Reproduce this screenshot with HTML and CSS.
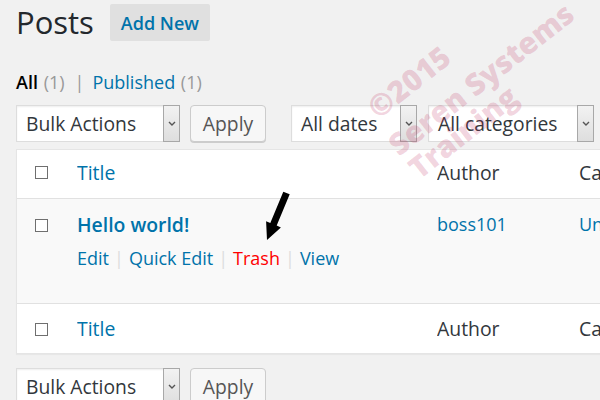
FILE: index.html
```html
<!DOCTYPE html>
<html>
<head>
<meta charset="utf-8">
<link rel="stylesheet" href="styles.css">
</head>
<body>
<div class="page">
  <div class="head">
    <h1 class="title">Posts</h1>
    <a class="add-new">Add New</a>
  </div>
  <div class="views">
    <span class="current">All</span> <span class="count">(1)</span><span class="vsep">|</span><a class="link">Published</a> <span class="count">(1)</span>
  </div>
  <div class="tablenav">
    <div class="select w-bulk"><span class="sel-text">Bulk Actions</span><span class="arrow"><svg width="8" height="5" viewBox="0 0 8 5"><path d="M1 1 L4 4 L7 1" fill="none" stroke="#555" stroke-width="1.4"/></svg></span></div>
    <button class="btn">Apply</button>
    <div class="select w-dates"><span class="sel-text">All dates</span><span class="arrow"><svg width="8" height="5" viewBox="0 0 8 5"><path d="M1 1 L4 4 L7 1" fill="none" stroke="#555" stroke-width="1.4"/></svg></span></div>
    <div class="select w-cats"><span class="sel-text">All categories</span><span class="arrow"><svg width="8" height="5" viewBox="0 0 8 5"><path d="M1 1 L4 4 L7 1" fill="none" stroke="#555" stroke-width="1.4"/></svg></span></div>
  </div>
  <div class="table">
    <div class="row row-head">
      <div class="cell cb"><span class="box"></span></div>
      <div class="cell"><a class="link col-title">Title</a></div>
      <div class="cell col-text">Author</div>
      <div class="cell col-text">Categories</div>
    </div>
    <div class="row row-post">
      <div class="cell cb"><span class="box"></span></div>
      <div class="cell">
        <div class="row-title">Hello world!</div>
        <div class="row-actions"><a class="link">Edit</a><span class="asep">|</span><a class="link">Quick Edit</a><span class="asep">|</span><a class="trash">Trash</a><span class="asep">|</span><a class="link">View</a></div>
      </div>
      <div class="cell"><a class="link data">boss101</a></div>
      <div class="cell"><a class="link data">Uncategorized</a></div>
    </div>
    <div class="row row-foot">
      <div class="cell cb"><span class="box"></span></div>
      <div class="cell"><a class="link col-title">Title</a></div>
      <div class="cell col-text">Author</div>
      <div class="cell col-text">Categories</div>
    </div>
  </div>
  <div class="tablenav bottom">
    <div class="select w-bulk"><span class="sel-text">Bulk Actions</span><span class="arrow"><svg width="8" height="5" viewBox="0 0 8 5"><path d="M1 1 L4 4 L7 1" fill="none" stroke="#555" stroke-width="1.4"/></svg></span></div>
    <button class="btn">Apply</button>
  </div>
</div>

<svg class="pointer" width="600" height="400" viewBox="0 0 600 400">
  <polygon points="283.3,191.7 289.7,194.3 276.7,225.6 280.9,227.4 267,240 266.1,221.2 270.3,223.0" fill="#000"/>
</svg>

<div class="watermark">
  <span class="wm wm1">©2015</span>
  <span class="wm wm2">Seren Systems</span>
  <span class="wm wm3">Training</span>
</div>
</body>
</html>
```

FILE: styles.css
```css
html, body {
  margin: 0;
  padding: 0;
}
body {
  width: 600px;
  height: 400px;
  overflow: hidden;
  background: #f1f1f1;
  font-family: "Open Sans", "Liberation Sans", sans-serif;
  color: #32373c;
  position: relative;
}
.page {
  padding-left: 16px;
  padding-top: 4px;
}
.head {
  display: flex;
  align-items: center;
  height: 37px;
}
.title {
  margin: 0;
  font-size: 31px;
  font-weight: 400;
  line-height: 37px;
  color: #23282d;
}
.add-new {
  margin-left: 16px;
  width: 100px;
  height: 37px;
  display: flex;
  align-items: center;
  justify-content: center;
  background: #e0e0e0;
  border-radius: 2px;
  color: #0073aa;
  font-size: 18px;
  font-weight: 600;
}
.views {
  margin-top: 29px;
  font-size: 18px;
  line-height: 24px;
  height: 24px;
  white-space: nowrap;
  color: #555;
}
.current {
  color: #000;
  font-weight: 600;
}
.count {
  color: #999;
  margin-left: 1px;
}
.vsep {
  color: #999;
  margin: 0 8px 0 10px;
}
.link {
  color: #0073aa;
  text-decoration: none;
}
.tablenav {
  margin-top: 11px;
  display: flex;
  height: 37px;
}
.tablenav.bottom {
  margin-top: 14px;
}
.select {
  box-sizing: border-box;
  height: 37px;
  background: #fff;
  border: 1px solid #ddd;
  box-shadow: inset 0 1px 2px rgba(0,0,0,0.07);
  display: flex;
  align-items: center;
  justify-content: space-between;
  font-size: 19.3px;
  color: #32373c;
  white-space: nowrap;
}
.sel-text {
  padding-left: 9px;
}
.arrow {
  box-sizing: border-box;
  width: 17px;
  height: 37px;
  margin: -1px -1px -1px 0;
  border: 1px solid #a8a8a8;
  background: linear-gradient(#f2f2f2, #dedede);
  display: flex;
  align-items: center;
  justify-content: center;
}
.w-bulk { width: 164px; }
.w-dates { width: 126px; margin-left: 25px; }
.w-cats { width: 166px; margin-left: 11px; }
.btn {
  box-sizing: border-box;
  margin-left: 10px;
  width: 76px;
  height: 37px;
  border: 1px solid #ccc;
  border-radius: 4px;
  background: #f7f7f7;
  box-shadow: 0 1px 0 #ccc;
  font-family: "Open Sans", "Liberation Sans", sans-serif;
  font-size: 19.3px;
  color: #555;
  padding: 0;
}
.table {
  margin-top: 7px;
  width: 640px;
  background: #fff;
  border: 1px solid #e5e5e5;
  box-shadow: 0 1px 1px rgba(0,0,0,0.04);
}
.row {
  display: grid;
  grid-template-columns: 60px 360px 142px 1fr;
  box-sizing: border-box;
  align-items: start;
}
.row-head {
  height: 49px;
  border-bottom: 1px solid #e1e1e1;
}
.row-head .cell { padding-top: 9px; }
.row-head .cb { padding-top: 16px; }
.row-post {
  height: 105px;
  background: #f9f9f9;
  border-bottom: 1px solid #e1e1e1;
}
.row-post .cell { padding-top: 12px; }
.row-post .cb { padding-top: 20px; }
.row-foot {
  height: 49px;
}
.row-foot .cell { padding-top: 11px; }
.row-foot .cb { padding-top: 19px; }
.cell {
  white-space: nowrap;
  overflow: hidden;
}
.box {
  display: block;
  margin-left: 18px;
  width: 13px;
  height: 13px;
  box-sizing: border-box;
  border: 1px solid #6f6f6f;
  background: #fff;
}
.col-title, .col-text {
  font-size: 19.4px;
  line-height: 27px;
}
.col-text {
  color: #32373c;
}
.row-title {
  font-size: 19.4px;
  font-weight: 600;
  line-height: 27px;
  color: #0073aa;
}
.data {
  display: block;
  font-size: 18px;
  line-height: 27px;
}
.row-actions {
  margin-top: 8px;
  font-size: 18px;
  line-height: 25px;
}
.asep {
  color: #ddd;
  margin: 0 5px;
}
.trash {
  color: #f00;
}
.pointer {
  position: absolute;
  left: 0;
  top: 0;
  pointer-events: none;
}
.watermark {
  position: absolute;
  left: 0;
  top: 0;
  width: 600px;
  height: 400px;
  pointer-events: none;
}
.wm {
  position: absolute;
  left: 0;
  top: 0;
  font-family: "Open Sans", "DejaVu Sans", sans-serif;
  font-weight: 800;
  font-size: 30px;
  line-height: 30px;
  white-space: nowrap;
  color: rgba(190, 40, 90, 0.2);
  transform-origin: 50% 50%;
}
.wm1 { transform: translate(409px, 82px) translate(-50%, -50%) rotate(-38deg); }
.wm2 { transform: translate(481px, 79px) translate(-50%, -50%) rotate(-38deg); }
.wm3 { transform: translate(463px, 132px) translate(-50%, -50%) rotate(-38deg); }
```
